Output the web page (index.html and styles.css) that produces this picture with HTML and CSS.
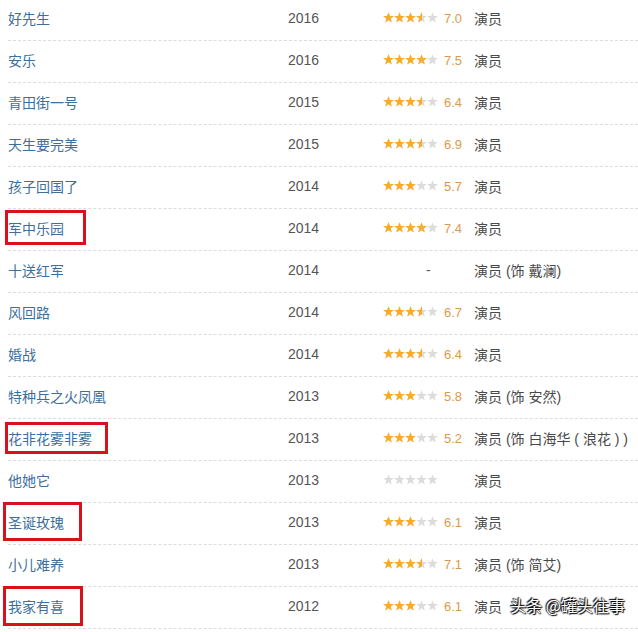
FILE: index.html
```html
<!DOCTYPE html>
<html lang="zh">
<head>
    <meta charset="UTF-8">
    <title>作品列表</title>
    <link rel="stylesheet" href="styles.css">
</head>
<body>
    <svg class="defs" width="0" height="0">
        <symbol id="star" viewBox="0 0 11 11">
            <path d="M5.5 0.2L6.9 3.9L10.9 4.1L7.7 6.5L8.8 10.4L5.5 8.2L2.2 10.4L3.3 6.5L0.1 4.1L4.1 3.9Z"/>
        </symbol>
        <symbol id="five" viewBox="0 0 55 11">
            <use href="#star" x="0" width="11" height="11"/>
            <use href="#star" x="11" width="11" height="11"/>
            <use href="#star" x="22" width="11" height="11"/>
            <use href="#star" x="33" width="11" height="11"/>
            <use href="#star" x="44" width="11" height="11"/>
        </symbol>
    </svg>

    <ul class="works">
        <li class="row">
            <a class="title" href="#">好先生</a>
            <span class="year">2016</span>
            <span class="rating"><span class="stars"><svg class="bg"><use href="#five"/></svg><span class="fg s35"><svg><use href="#five"/></svg></span></span><span class="num">7.0</span></span>
            <span class="role">演员</span>
        </li>
        <li class="row">
            <a class="title" href="#">安乐</a>
            <span class="year">2016</span>
            <span class="rating"><span class="stars"><svg class="bg"><use href="#five"/></svg><span class="fg s40"><svg><use href="#five"/></svg></span></span><span class="num">7.5</span></span>
            <span class="role">演员</span>
        </li>
        <li class="row">
            <a class="title" href="#">青田街一号</a>
            <span class="year">2015</span>
            <span class="rating"><span class="stars"><svg class="bg"><use href="#five"/></svg><span class="fg s35"><svg><use href="#five"/></svg></span></span><span class="num">6.4</span></span>
            <span class="role">演员</span>
        </li>
        <li class="row">
            <a class="title" href="#">天生要完美</a>
            <span class="year">2015</span>
            <span class="rating"><span class="stars"><svg class="bg"><use href="#five"/></svg><span class="fg s35"><svg><use href="#five"/></svg></span></span><span class="num">6.9</span></span>
            <span class="role">演员</span>
        </li>
        <li class="row">
            <a class="title" href="#">孩子回国了</a>
            <span class="year">2014</span>
            <span class="rating"><span class="stars"><svg class="bg"><use href="#five"/></svg><span class="fg s30"><svg><use href="#five"/></svg></span></span><span class="num">5.7</span></span>
            <span class="role">演员</span>
        </li>
        <li class="row">
            <a class="title" href="#">军中乐园<span class="mark mark-1"></span></a>
            <span class="year">2014</span>
            <span class="rating"><span class="stars"><svg class="bg"><use href="#five"/></svg><span class="fg s40"><svg><use href="#five"/></svg></span></span><span class="num">7.4</span></span>
            <span class="role">演员</span>
        </li>
        <li class="row">
            <a class="title" href="#">十送红军</a>
            <span class="year">2014</span>
            <span class="rating"><span class="none">-</span></span>
            <span class="role">演员 (饰 戴澜)</span>
        </li>
        <li class="row">
            <a class="title" href="#">风回路</a>
            <span class="year">2014</span>
            <span class="rating"><span class="stars"><svg class="bg"><use href="#five"/></svg><span class="fg s35"><svg><use href="#five"/></svg></span></span><span class="num">6.7</span></span>
            <span class="role">演员</span>
        </li>
        <li class="row">
            <a class="title" href="#">婚战</a>
            <span class="year">2014</span>
            <span class="rating"><span class="stars"><svg class="bg"><use href="#five"/></svg><span class="fg s35"><svg><use href="#five"/></svg></span></span><span class="num">6.4</span></span>
            <span class="role">演员</span>
        </li>
        <li class="row">
            <a class="title" href="#">特种兵之火凤凰</a>
            <span class="year">2013</span>
            <span class="rating"><span class="stars"><svg class="bg"><use href="#five"/></svg><span class="fg s30"><svg><use href="#five"/></svg></span></span><span class="num">5.8</span></span>
            <span class="role">演员 (饰 安然)</span>
        </li>
        <li class="row">
            <a class="title" href="#">花非花雾非雾<span class="mark mark-2"></span></a>
            <span class="year">2013</span>
            <span class="rating"><span class="stars"><svg class="bg"><use href="#five"/></svg><span class="fg s30"><svg><use href="#five"/></svg></span></span><span class="num">5.2</span></span>
            <span class="role">演员 (饰 白海华 ( 浪花 ) )</span>
        </li>
        <li class="row">
            <a class="title" href="#">他她它</a>
            <span class="year">2013</span>
            <span class="rating"><span class="stars"><svg class="bg"><use href="#five"/></svg></span></span>
            <span class="role">演员</span>
        </li>
        <li class="row">
            <a class="title" href="#">圣诞玫瑰<span class="mark mark-3"></span></a>
            <span class="year">2013</span>
            <span class="rating"><span class="stars"><svg class="bg"><use href="#five"/></svg><span class="fg s30"><svg><use href="#five"/></svg></span></span><span class="num">6.1</span></span>
            <span class="role">演员</span>
        </li>
        <li class="row">
            <a class="title" href="#">小儿难养</a>
            <span class="year">2013</span>
            <span class="rating"><span class="stars"><svg class="bg"><use href="#five"/></svg><span class="fg s35"><svg><use href="#five"/></svg></span></span><span class="num">7.1</span></span>
            <span class="role">演员 (饰 简艾)</span>
        </li>
        <li class="row">
            <a class="title" href="#">我家有喜<span class="mark mark-4"></span></a>
            <span class="year">2012</span>
            <span class="rating"><span class="stars"><svg class="bg"><use href="#five"/></svg><span class="fg s30"><svg><use href="#five"/></svg></span></span><span class="num">6.1</span></span>
            <span class="role">演员</span>
        </li>
    </ul>

    <!-- 水印 -->
    <div class="watermark">头条 @罐头往事</div>
</body>
</html>
```

FILE: styles.css
```css
body {
    position: relative;
    width: 638px;
    height: 632px;
    margin: 0;
    overflow: hidden;
    background: #fff;
    font-family: Arial, "Liberation Sans", "Noto Sans CJK SC", sans-serif;
    font-size: 14px;
    color: #494949;
}

.defs {
    position: absolute;
}

.works {
    list-style: none;
    margin: -1px 0 0 8px;
    padding: 0;
}

.row {
    display: flex;
    align-items: center;
    height: 38px;
    padding-bottom: 3px;
    border-bottom: 1px dashed #dcdcdc;
}

.title {
    position: relative;
    width: 280px;
    color: #3d6f9c;
    text-decoration: none;
}

.year {
    width: 95px;
    color: #555;
}

.rating {
    display: flex;
    align-items: center;
    width: 91px;
}

.stars {
    position: relative;
    width: 55px;
    height: 11px;
    margin-top: -1px;
}

.stars svg {
    display: block;
    width: 55px;
    height: 11px;
}

.stars .bg {
    fill: #dcdcdc;
}

.fg {
    position: absolute;
    top: 0;
    left: 0;
    height: 11px;
    overflow: hidden;
    fill: #fbab2c;
}

.s30 { width: 33px; }
.s35 { width: 38.5px; }
.s40 { width: 44px; }

.num {
    margin-left: 6px;
    font-size: 13px;
    color: #dc9a4c;
}

.none {
    padding-left: 43px;
    color: #555;
}

.role {
    color: #494949;
    white-space: nowrap;
}

/* 红框标注 */
.mark {
    position: absolute;
    border: 3px solid #d8121c;
}

.mark-1 { left: -3px; top: -8px; width: 75px; height: 29px; }
.mark-2 { left: -3px; top: -6px; width: 97px; height: 26px; }
.mark-3 { left: -5px; top: -10px; width: 73px; height: 33px; }
.mark-4 { left: -5px; top: -10px; width: 74px; height: 34px; }

.watermark {
    position: absolute;
    right: 13px;
    bottom: 15px;
    font-family: "Noto Sans CJK SC", sans-serif;
    font-size: 16px;
    color: #fff;
    text-shadow: 0 0 2px #000, 1px 1px 1px #000, -1px -1px 1px #000;
}
```
